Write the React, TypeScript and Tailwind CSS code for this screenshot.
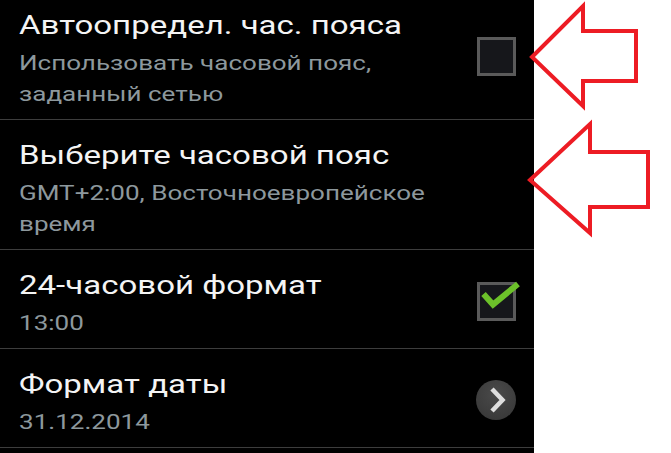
import React from "react";

type Row = {
  title: string;
  lines: string[];
  widget?: "off" | "on" | "more";
};

const rows: Row[] = [
  { title: "Автоопредел. час. пояса", lines: ["Использовать часовой пояс,", "заданный сетью"], widget: "off" },
  { title: "Выберите часовой пояс", lines: ["GMT+2:00, Восточноевропейское", "время"] },
  { title: "24-часовой формат", lines: ["13:00"], widget: "on" },
  { title: "Формат даты", lines: ["31.12.2014"], widget: "more" },
];

const CheckBox: React.FC<{ checked: boolean }> = ({ checked }) => (
  <div className="relative w-[39px] h-[39px] border-[3px] border-[#5a5a5a] bg-[#16171b]">
    {checked && (
      <svg className="absolute -left-[3px] -top-[3px] overflow-visible" width="39" height="39" viewBox="0 0 39 39">
        <path d="M6.5 12 L16 22.5 L41 2" fill="none" stroke="#6cc12a" strokeWidth="6" strokeLinecap="butt" strokeLinejoin="miter" />
      </svg>
    )}
  </div>
);

const MoreButton: React.FC = () => (
  <div className="w-[40px] h-[40px] rounded-full bg-[radial-gradient(circle_at_50%_35%,#4a4a4a,#353535)] shadow-[0_1px_1px_rgba(0,0,0,0.6)] flex items-center justify-center">
    <svg width="40" height="40" viewBox="0 0 40 40">
      <path d="M16 9 L26.5 20 L16 31" fill="none" stroke="#dedede" strokeWidth="4.5" strokeLinejoin="miter" />
    </svg>
  </div>
);

export default function App() {
  return (
    <div className="relative w-[671px] h-[453px] overflow-hidden bg-white flex" style={{ fontFamily: "Roboto, 'Noto Sans', sans-serif" }}>
      {/* список настроек */}
      <div className="w-[534px] h-full bg-black">
        <div className="-mt-[10px]">
          {rows.map((r) => (
            <div key={r.title} className="flex items-center pl-[19px] pr-[18px] pt-[13px] pb-[9px] border-b border-[#3d3d3d]">
              <div className="w-[346px] shrink-0 origin-left scale-x-[1.27]">
                <div className="text-[26px] leading-[45px] text-[#f4f4f4] whitespace-nowrap">{r.title}</div>
                {r.lines.map((l) => (
                  <div key={l} className="text-[20.5px] leading-[31px] text-[#8d989d]">{l}</div>
                ))}
              </div>
              <div className="w-[40px] ml-auto flex justify-center">
                {r.widget === "off" && <CheckBox checked={false} />}
                {r.widget === "on" && <CheckBox checked />}
                {r.widget === "more" && <MoreButton />}
              </div>
            </div>
          ))}
        </div>
      </div>

      {/* красные стрелки */}
      <svg className="absolute left-0 top-0 pointer-events-none" width="671" height="453" viewBox="0 0 671 453">
        <polygon points="532,57 583,6 583,31 636,31 636,81 583,81 583,106" fill="none" stroke="#ed1c24" strokeWidth="4" />
        <polygon points="530,180 590,124 590,152 648,152 648,207 590,207 590,233" fill="none" stroke="#ed1c24" strokeWidth="4" />
      </svg>
    </div>
  );
}
